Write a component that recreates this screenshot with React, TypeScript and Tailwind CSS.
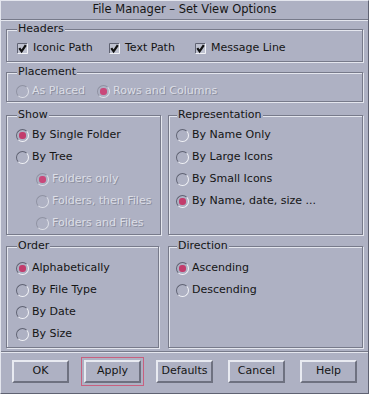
import type { ReactNode } from "react";

const font = { fontFamily: '"DejaVu Sans", "Liberation Sans", sans-serif' };

function Radio({ label, checked = false, disabled = false }: { label: string; checked?: boolean; disabled?: boolean }) {
  return (
    <div className="flex items-center h-full">
      <span
        className={`w-[13px] h-[13px] rounded-full border flex items-center justify-center shrink-0 ${
          disabled
            ? "border-t-[#8f92a2] border-l-[#8f92a2] border-b-[#dfe1e8] border-r-[#dfe1e8]"
            : "border-t-[#5f6272] border-l-[#5f6272] border-b-[#f2f3f7] border-r-[#f2f3f7]"
        }`}
      >
        {checked && <span className={`w-[7px] h-[7px] rounded-[3px] ${disabled ? "bg-[#c9487a]" : "bg-[#c23c6c]"}`} />}
      </span>
      <span
        className={`ml-[3px] whitespace-nowrap ${
          disabled ? "text-[#dcdee6] [text-shadow:1px_1px_0_#8c8f9e]" : "text-[#151515]"
        }`}
      >
        {label}
      </span>
    </div>
  );
}

function Check({ label }: { label: string }) {
  return (
    <div className="flex items-center h-full">
      <svg width="11" height="11" viewBox="0 0 11 11" className="shrink-0">
        <rect x="0" y="0" width="11" height="11" fill="#bfc2d0" />
        <path d="M0.5 10.5V0.5H10.5" stroke="#5f6272" fill="none" />
        <path d="M10.5 0.5V10.5H0.5" stroke="#f2f3f7" fill="none" />
        <path d="M2.3 5.2L4.6 8.4L8.8 2.2" stroke="#111" strokeWidth="2.2" fill="none" />
      </svg>
      <span className="ml-[5px] whitespace-nowrap text-[#151515]">{label}</span>
    </div>
  );
}

function Group({ title, className = "", children }: { title: string; className?: string; children: ReactNode }) {
  return (
    <fieldset
      className={`border border-[#777a8a] [box-shadow:inset_1px_1px_0_#e4e6ee,1px_1px_0_#e4e6ee] px-[9px] ${className}`}
    >
      <legend className="leading-[14px] ml-[1px] px-[1px] bg-[#aeb1c3] text-[#151515]">{title}</legend>
      {children}
    </fieldset>
  );
}

function Button({ label, focused = false }: { label: string; focused?: boolean }) {
  return (
    <div className={`p-[2px] ${focused ? "border border-[#c8607f]" : "border border-transparent"}`}>
      <button className="w-[57px] h-[23px] border-2 border-t-[#e8eaf1] border-l-[#e8eaf1] border-b-[#6e7180] border-r-[#6e7180] bg-[#aeb1c3] text-[#151515]">
        {label}
      </button>
    </div>
  );
}

export default function App() {
  return (
    <div
      style={font}
      className="w-[369px] h-[394px] bg-[#aeb1c3] text-[11px] border border-t-[#e4e6ee] border-l-[#e4e6ee] border-b-[#5f6272] border-r-[#5f6272] flex flex-col overflow-hidden"
    >
      <div className="h-[19px] flex items-center justify-center border-b border-[#777a8a] text-[#151515] text-[11.5px] leading-none">
        File Manager – Set View Options
      </div>
      <div className="border-t border-[#e4e6ee]" />

      <div className="px-[5px] flex flex-col">
        <Group title="Headers" className="mt-[1px] pt-[2px] pb-[3px]">
          <div className="h-[20px] flex">
            <div className="w-[93px] pl-[1px]"><Check label="Iconic Path" /></div>
            <div className="w-[86px]"><Check label="Text Path" /></div>
            <Check label="Message Line" />
          </div>
        </Group>

        <Group title="Placement" className="mt-[3px] pt-[2px] pb-[0px]">
          <div className="h-[20px] flex">
            <div className="w-[81px]"><Radio label="As Placed" disabled /></div>
            <Radio label="Rows and Columns" checked disabled />
          </div>
        </Group>

        <div className="grid grid-cols-[153px_1fr] gap-[9px] mt-[6px]">
          <Group title="Show" className="pt-[2px] pb-[0px]">
            <div className="h-[22px]"><Radio label="By Single Folder" checked /></div>
            <div className="h-[22px]"><Radio label="By Tree" /></div>
            <div className="h-[22px] pl-[20px]"><Radio label="Folders only" checked disabled /></div>
            <div className="h-[22px] pl-[20px]"><Radio label="Folders, then Files" disabled /></div>
            <div className="h-[22px] pl-[20px]"><Radio label="Folders and Files" disabled /></div>
          </Group>
          <Group title="Representation" className="pt-[2px] pb-[0px] pl-[7px]">
            <div className="h-[22px]"><Radio label="By Name Only" /></div>
            <div className="h-[22px]"><Radio label="By Large Icons" /></div>
            <div className="h-[22px]"><Radio label="By Small Icons" /></div>
            <div className="h-[22px]"><Radio label="By Name, date, size ..." checked /></div>
          </Group>
        </div>

        <div className="grid grid-cols-[153px_1fr] gap-[9px] mt-[4px]">
          <Group title="Order" className="pt-[4px] pb-[2px]">
            <div className="h-[22px]"><Radio label="Alphabetically" checked /></div>
            <div className="h-[22px]"><Radio label="By File Type" /></div>
            <div className="h-[22px]"><Radio label="By Date" /></div>
            <div className="h-[22px]"><Radio label="By Size" /></div>
          </Group>
          <Group title="Direction" className="pt-[4px] pb-[2px] pl-[7px]">
            <div className="h-[22px]"><Radio label="Ascending" checked /></div>
            <div className="h-[22px]"><Radio label="Descending" /></div>
          </Group>
        </div>
      </div>

      <div className="mt-[3px] border-t border-[#777a8a]" />
      <div className="border-t border-[#e4e6ee]" />

      <div className="flex justify-between px-[8px] mt-[4px]">
        <Button label="OK" />
        <Button label="Apply" focused />
        <Button label="Defaults" />
        <Button label="Cancel" />
        <Button label="Help" />
      </div>
    </div>
  );
}
